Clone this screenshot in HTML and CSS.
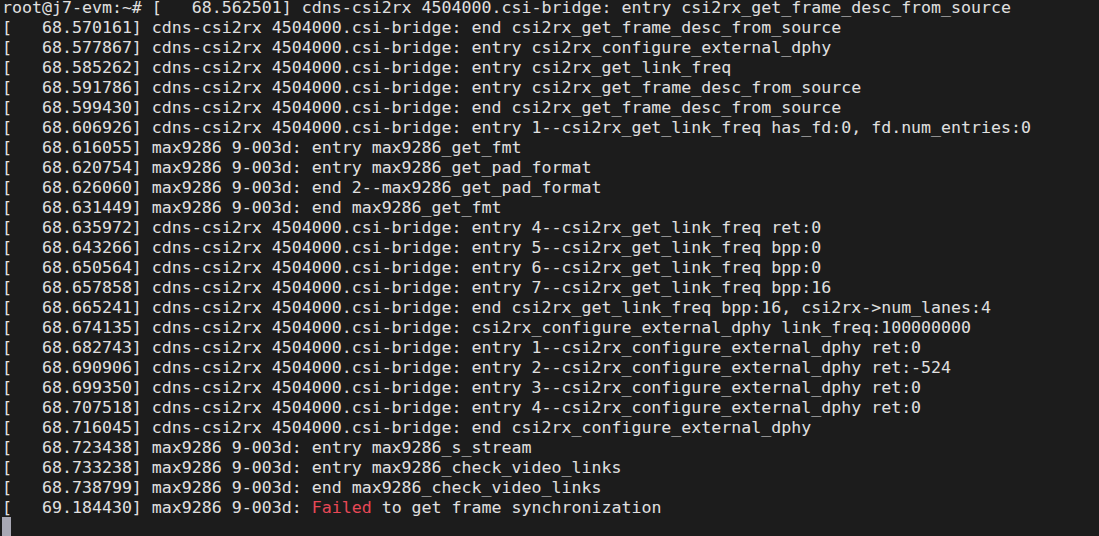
FILE: index.html
```html
<!DOCTYPE html>
<html>
<head>
<meta charset="utf-8">
<link rel="stylesheet" href="styles.css">
</head>
<body>
<pre class="term">root@j7-evm:~# [   68.562501] cdns-csi2rx 4504000.csi-bridge: entry csi2rx_get_frame_desc_from_source
[   68.570161] cdns-csi2rx 4504000.csi-bridge: end csi2rx_get_frame_desc_from_source
[   68.577867] cdns-csi2rx 4504000.csi-bridge: entry csi2rx_configure_external_dphy
[   68.585262] cdns-csi2rx 4504000.csi-bridge: entry csi2rx_get_link_freq
[   68.591786] cdns-csi2rx 4504000.csi-bridge: entry csi2rx_get_frame_desc_from_source
[   68.599430] cdns-csi2rx 4504000.csi-bridge: end csi2rx_get_frame_desc_from_source
[   68.606926] cdns-csi2rx 4504000.csi-bridge: entry 1--csi2rx_get_link_freq has_fd:0, fd.num_entries:0
[   68.616055] max9286 9-003d: entry max9286_get_fmt
[   68.620754] max9286 9-003d: entry max9286_get_pad_format
[   68.626060] max9286 9-003d: end 2--max9286_get_pad_format
[   68.631449] max9286 9-003d: end max9286_get_fmt
[   68.635972] cdns-csi2rx 4504000.csi-bridge: entry 4--csi2rx_get_link_freq ret:0
[   68.643266] cdns-csi2rx 4504000.csi-bridge: entry 5--csi2rx_get_link_freq bpp:0
[   68.650564] cdns-csi2rx 4504000.csi-bridge: entry 6--csi2rx_get_link_freq bpp:0
[   68.657858] cdns-csi2rx 4504000.csi-bridge: entry 7--csi2rx_get_link_freq bpp:16
[   68.665241] cdns-csi2rx 4504000.csi-bridge: end csi2rx_get_link_freq bpp:16, csi2rx-&gt;num_lanes:4
[   68.674135] cdns-csi2rx 4504000.csi-bridge: csi2rx_configure_external_dphy link_freq:100000000
[   68.682743] cdns-csi2rx 4504000.csi-bridge: entry 1--csi2rx_configure_external_dphy ret:0
[   68.690906] cdns-csi2rx 4504000.csi-bridge: entry 2--csi2rx_configure_external_dphy ret:-524
[   68.699350] cdns-csi2rx 4504000.csi-bridge: entry 3--csi2rx_configure_external_dphy ret:0
[   68.707518] cdns-csi2rx 4504000.csi-bridge: entry 4--csi2rx_configure_external_dphy ret:0
[   68.716045] cdns-csi2rx 4504000.csi-bridge: end csi2rx_configure_external_dphy
[   68.723438] max9286 9-003d: entry max9286_s_stream
[   68.733238] max9286 9-003d: entry max9286_check_video_links
[   68.738799] max9286 9-003d: end max9286_check_video_links
[   69.184430] max9286 9-003d: <span class="err">Failed</span> to get frame synchronization
<span class="cursor"> </span></pre>
</body>
</html>
```
FILE: styles.css
```css
html, body {
  margin: 0;
  padding: 0;
  background: #1c1c1c;
  height: 100%;
  overflow: hidden;
}
.term {
  margin: 0;
  padding: 0 0 0 2px;
  font-family: "DejaVu Sans Mono", "Liberation Mono", monospace;
  font-size: 16.6px;
  line-height: 20px;
  color: #e0e0e0;
  white-space: pre;
  position: relative;
  top: -2px;
}
.err {
  color: #e74856;
}
.cursor {
  display: inline-block;
  width: 9px;
  height: 19px;
  background: #a8a8b4;
  vertical-align: top;
  margin-top: -1px;
}
```
